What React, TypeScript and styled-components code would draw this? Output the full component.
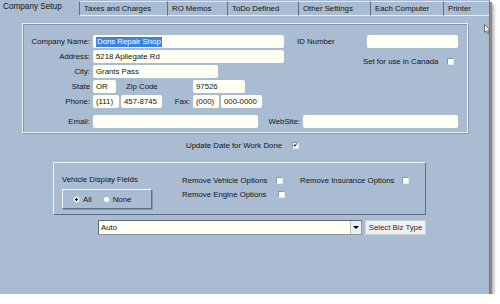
import * as React from "react"
import styled, { createGlobalStyle } from "styled-components"

const Global = createGlobalStyle`
  html, body {
    margin: 0;
    background: #ffffff;
  }
  * {
    box-sizing: border-box;
  }
`

const Window = styled.div`
  position: relative;
  width: 490px;
  height: 294px;
  background: #a9bcd2;
  border-right: 1px solid #6f7b88;
  box-shadow: 2px 2px 0 #8a8a8a, 4px 4px 3px rgba(0, 0, 0, 0.3);
  font-family: "Liberation Sans", Arial, sans-serif;
  font-size: 7.8px;
  color: #141414;
  display: flex;
  flex-direction: column;
`

const TabBar = styled.div`
  display: flex;
  height: 16px;
  align-items: flex-end;
`

const Tab = styled.div<{ $w: number; $active?: boolean }>`
  width: ${p => p.$w}px;
  height: ${p => (p.$active ? 16 : 15)}px;
  display: flex;
  align-items: center;
  padding-left: ${p => (p.$active ? 3 : 4)}px;
  padding-bottom: ${p => (p.$active ? 3 : 0)}px;
  white-space: nowrap;
  font-size: ${p => (p.$active ? 8.2 : 7.8)}px;
  border-left: ${p => (p.$active ? "none" : "1px solid #5f6e80")};
  border-top: ${p => (p.$active ? "none" : "1px solid #dfe7f0")};
  border-bottom: ${p => (p.$active ? "none" : "1px solid #e6edf5")};
`

const Frame = styled.div`
  margin: 7px 0 0 22px;
  width: 446px;
  height: 110px;
  border: 1px solid #edf2f7;
  box-shadow: inset 1px 1px 0 rgba(95, 112, 132, 0.55), 1px 1px 0 rgba(95, 112, 132, 0.4);
  padding-top: 11px;
  display: flex;
  flex-direction: column;
`

const TopArea = styled.div`
  display: flex;
`

const LeftFields = styled.div`
  width: 261px;
  display: flex;
  flex-direction: column;
  gap: 2px;
`

const RightFields = styled.div`
  margin-left: 13px;
  width: 161px;
  display: flex;
  flex-direction: column;
`

const Row = styled.div<{ $top?: number }>`
  display: flex;
  align-items: center;
  height: 13px;
  margin-top: ${p => p.$top || 0}px;
`

const Label = styled.span<{ $w?: number; $left?: number; $align?: string }>`
  width: ${p => (p.$w ? `${p.$w}px` : "auto")};
  margin-left: ${p => p.$left || 0}px;
  text-align: ${p => p.$align || "right"};
  padding-right: ${p => (p.$align === "left" ? 0 : 3)}px;
  white-space: nowrap;
  flex-shrink: 0;
`

const Field = styled.div<{ $w: number; $left?: number }>`
  width: ${p => p.$w}px;
  height: 13px;
  margin-left: ${p => p.$left || 0}px;
  background: #fffff3;
  border-radius: 2px;
  display: flex;
  align-items: center;
  padding-left: 3px;
  white-space: nowrap;
  overflow: hidden;
  flex-shrink: 0;
`

const Selected = styled.span`
  background: #3b83e0;
  color: #ffffff;
  padding: 0 1px;
  line-height: 10px;
`

const Check = styled.span<{ $left?: number }>`
  width: 7px;
  height: 7px;
  margin-left: ${p => p.$left || 0}px;
  background: #ffffff;
  border: 1px solid #8d97a3;
  border-right-color: #e4e8ec;
  border-bottom-color: #e4e8ec;
  flex-shrink: 0;
  display: flex;
  align-items: center;
  justify-content: center;
  font-size: 6px;
  line-height: 1;
  color: #000;
`

const UpdateRow = styled.div`
  display: flex;
  align-items: center;
  height: 10px;
  margin: 7px 0 0 186px;
`

const Group = styled.div`
  margin: 12px 0 0 53px;
  width: 373px;
  height: 53px;
  border: 1px solid;
  border-color: #f2f6fa #5f6f82 #5f6f82 #f2f6fa;
  display: flex;
`

const GroupLeft = styled.div`
  width: 128px;
  padding: 12px 0 0 8px;
  display: flex;
  flex-direction: column;
`

const GroupTitle = styled.div`
  height: 10px;
  line-height: 10px;
`

const RadioBox = styled.div`
  margin-top: 4px;
  width: 90px;
  height: 20px;
  border: 1px solid;
  border-color: #f2f6fa #5f6f82 #5f6f82 #f2f6fa;
  box-shadow: 1px 1px 0 #8796a8;
  display: flex;
  align-items: center;
  padding-left: 11px;
  gap: 12px;
`

const Radio = styled.span<{ $on?: boolean }>`
  display: inline-flex;
  align-items: center;
  gap: 4px;

  &::before {
    content: "";
    width: 5px;
    height: 5px;
    border-radius: 50%;
    background: ${p => (p.$on ? "radial-gradient(circle, #000 0 1px, #fff 1.5px)" : "#ffffff")};
    box-shadow: ${p => (p.$on ? "0 0 0 1px #c8d0da" : "none")};
  }
`

const Options = styled.div`
  padding-top: 12px;
  display: flex;
  flex-direction: column;
  gap: 4px;
`

const OptionRow = styled.div`
  display: flex;
  height: 10px;
  align-items: center;
`

const Option = styled.span<{ $w: number }>`
  width: ${p => p.$w}px;
  display: flex;
  align-items: center;
  white-space: nowrap;
`

const ComboRow = styled.div`
  display: flex;
  align-items: center;
  margin: 5px 0 0 98px;
  height: 15px;
`

const Combo = styled.div`
  width: 264px;
  height: 15px;
  display: flex;
  border: 1px solid #8a96a4;
  border-top-color: #5d6978;
  border-left-color: #5d6978;
  background: #fffff3;
`

const ComboText = styled.div`
  flex: 1;
  display: flex;
  align-items: center;
  padding-left: 2px;
`

const DropButton = styled.div`
  width: 11px;
  background: #eceff2;
  border-left: 1px solid #b8c0c9;
  display: flex;
  align-items: center;
  justify-content: center;

  &::after {
    content: "";
    border-left: 3px solid transparent;
    border-right: 3px solid transparent;
    border-top: 3px solid #000;
  }
`

const Button = styled.div`
  margin-left: 3px;
  width: 61px;
  height: 15px;
  background: #eef0f3;
  border: 1px solid #c9d0d8;
  display: flex;
  align-items: center;
  justify-content: center;
  white-space: nowrap;
  color: #2a2a2a;
`

const Cursor = styled.svg`
  position: absolute;
  left: 484px;
  top: 24px;
`

const tabs: [string, number][] = [
  ["Company Setup", 79],
  ["Taxes and Charges", 88],
  ["RO Memos", 60],
  ["ToDo Defined", 71],
  ["Other Settings", 72],
  ["Each Computer", 73],
  ["Printer", 46],
]

export default function App() {
  return (
    <>
      <Global />
      <Window>
        <TabBar>
          {tabs.map(([name, w], i) => (
            <Tab key={name} $w={w} $active={i === 0}>
              {name}
            </Tab>
          ))}
        </TabBar>

        <Frame>
          <TopArea>
            <LeftFields>
              <Row>
                <Label $w={70}>Company Name:</Label>
                <Field $w={191}>
                  <Selected>Dons Repair Shop</Selected>
                </Field>
              </Row>
              <Row>
                <Label $w={70}>Address:</Label>
                <Field $w={191}>5218 Apllegate Rd</Field>
              </Row>
              <Row>
                <Label $w={70}>City:</Label>
                <Field $w={125}>Grants Pass</Field>
              </Row>
              <Row>
                <Label $w={70}>State</Label>
                <Field $w={23}>OR</Field>
                <Label $w={67} $left={10} $align="left">Zip Code</Label>
                <Field $w={52}>97526</Field>
              </Row>
              <Row>
                <Label $w={70}>Phone:</Label>
                <Field $w={26}>(111)</Field>
                <Field $w={41} $left={2}>457-8745</Field>
                <Label $w={31}>Fax:</Label>
                <Field $w={26}>(000)</Field>
                <Field $w={41} $left={2}>000-0000</Field>
              </Row>
            </LeftFields>
            <RightFields>
              <Row>
                <Label $w={70} $align="left">ID Number</Label>
                <Field $w={91} />
              </Row>
              <Row $top={7}>
                <Label $left={66}>Set for use in Canada</Label>
                <Check $left={6} />
              </Row>
            </RightFields>
          </TopArea>
          <Row $top={7}>
            <Label $w={70}>Email:</Label>
            <Field $w={165} />
            <Label $w={45}>WebSite:</Label>
            <Field $w={155} />
          </Row>
        </Frame>

        <UpdateRow>
          Update Date for Work Done
          <Check $left={10}>✔</Check>
        </UpdateRow>

        <Group>
          <GroupLeft>
            <GroupTitle>Vehicle Display Fields</GroupTitle>
            <RadioBox>
              <Radio $on>All</Radio>
              <Radio>None</Radio>
            </RadioBox>
          </GroupLeft>
          <Options>
            <OptionRow>
              <Option $w={118}>
                Remove Vehicle Options
                <Check $left={9} />
              </Option>
              <Option $w={120}>
                Remove Insurance Options
                <Check $left={8} />
              </Option>
            </OptionRow>
            <OptionRow>
              <Option $w={118}>
                Remove Engine Options
                <Check $left={11} />
              </Option>
            </OptionRow>
          </Options>
        </Group>

        <ComboRow>
          <Combo>
            <ComboText>Auto</ComboText>
            <DropButton />
          </Combo>
          <Button>Select Biz Type</Button>
        </ComboRow>

        <Cursor width="7" height="11" viewBox="0 0 7 11">
          <path d="M0.5 0.5 L0.5 8.5 L2.5 6.8 L4 10 L5.2 9.5 L3.8 6.4 L6.3 6.4 Z" fill="#ffffff" stroke="#555" strokeWidth="0.8" />
        </Cursor>
      </Window>
    </>
  )
}
